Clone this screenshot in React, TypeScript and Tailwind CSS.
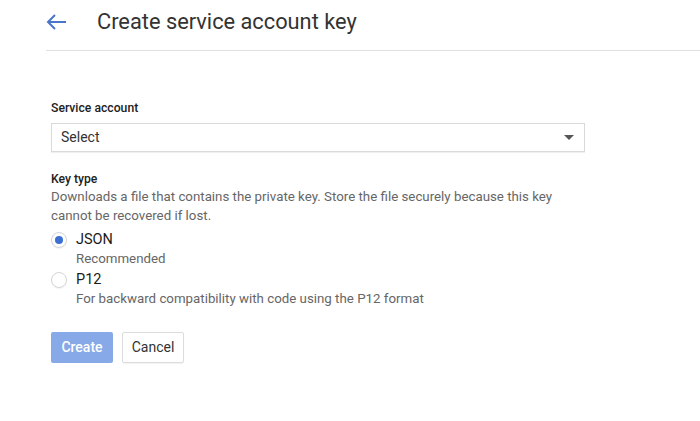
import { useState } from 'react';

type KeyOption = {
  value: string;
  label: string;
  hint: string;
};

const keyOptions: KeyOption[] = [
  { value: 'json', label: 'JSON', hint: 'Recommended' },
  { value: 'p12', label: 'P12', hint: 'For backward compatibility with code using the P12 format' },
];

export default function App() {
  const [keyType, setKeyType] = useState('json');

  return (
    <div className="min-h-[421px] w-[700px] bg-white font-['Roboto',sans-serif] text-[#212121]">
      <header className="ml-[46px] flex h-[51px] items-center border-b border-[#e0e0e0] pb-[6px]">
        <button className="mr-[30px] flex h-[20px] w-[21px] items-center text-[#4a76c9]">
          <svg width="21" height="16" viewBox="0 0 21 16" fill="none" stroke="currentColor" strokeWidth="2">
            <path d="M20 8H2M9 1L2 8l7 7" />
          </svg>
        </button>
        <h1 className="text-[21.8px] leading-[26px] text-[#333]">Create service account key</h1>
      </header>

      <main className="pl-[51px] pt-[49px]">
        <label className="block text-[12.2px] font-medium leading-[16px] text-[#212121]">Service account</label>
        <div className="mt-[7px] flex h-[29px] w-[534px] items-center justify-between border border-[#dadada] pl-[9px] pr-[10px] shadow-[0_1px_1px_rgba(0,0,0,0.06)]">
          <span className="text-[14px] text-[#333]">Select</span>
          <span className="h-0 w-0 border-x-[5px] border-t-[5px] border-x-transparent border-t-[#555]" />
        </div>

        <div className="mt-[19px] text-[12.2px] font-medium leading-[16px]">Key type</div>
        <p className="w-[520px] text-[13.3px] leading-[19px] text-[#666]">
          Downloads a file that contains the private key. Store the file securely because this key cannot be recovered
          if lost.
        </p>

        <div className="mt-[6px] flex flex-col gap-[3px]">
          {keyOptions.map((opt) => (
            <label key={opt.value} className="flex cursor-pointer items-start gap-[9px]">
              <input
                type="radio"
                name="keyType"
                className="sr-only"
                checked={keyType === opt.value}
                onChange={() => setKeyType(opt.value)}
              />
              <span className="mt-[1px] flex h-[16px] w-[16px] items-center justify-center rounded-full border border-[#d4d4d4] shadow-[0_1px_1px_rgba(0,0,0,0.05)]">
                {keyType === opt.value && <span className="h-[8px] w-[8px] rounded-full bg-[#3b6fd4]" />}
              </span>
              <span className="flex flex-col">
                <span className="text-[14.5px] leading-[18px] text-[#1a1a1a]">{opt.label}</span>
                <span className="text-[13.3px] leading-[19px] text-[#666]">{opt.hint}</span>
              </span>
            </label>
          ))}
        </div>

        <div className="mt-[24px] flex gap-[9px]">
          <button className="h-[31px] w-[62px] rounded-[2px] bg-[#87a9e8] text-[14px] font-medium text-white">Create</button>
          <button className="h-[31px] w-[62px] rounded-[2px] border border-[#dcdcdc] bg-white text-[14px] text-[#333] shadow-[0_1px_1px_rgba(0,0,0,0.05)]">
            Cancel
          </button>
        </div>
      </main>
    </div>
  );
}
